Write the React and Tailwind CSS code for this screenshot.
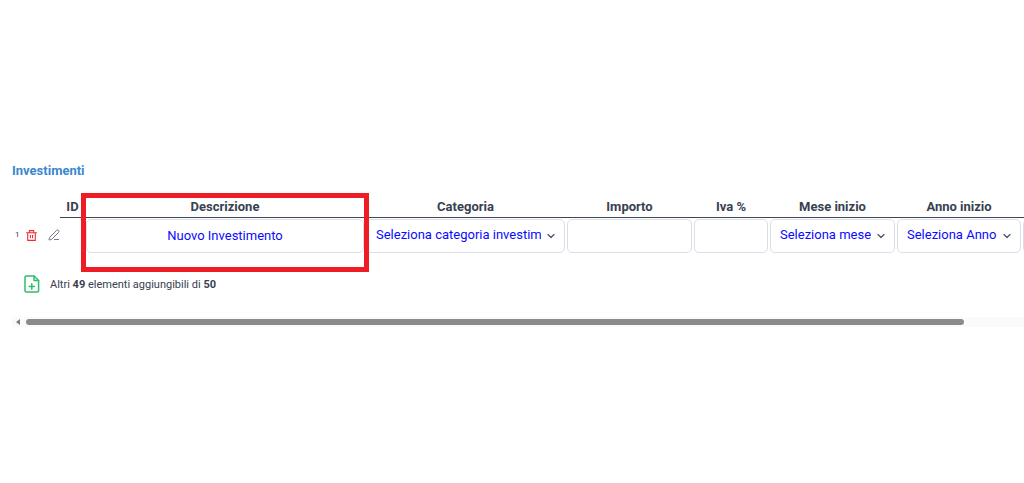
import { PenLine, ChevronDown } from "lucide-react";
import { RiDeleteBinLine } from "react-icons/ri";

const fieldClass =
  "block h-[34px] w-full appearance-none rounded-[5px] border border-[#d8dfe9] bg-white pb-[2px] text-[13px] text-[#0a0aff] outline-none";

function TextField({ label, value }) {
  return (
    <input
      type="text"
      aria-label={label}
      defaultValue={value}
      className={`${fieldClass} px-2 text-center`}
    />
  );
}

function SelectField({ label, placeholder }) {
  return (
    <div className="relative">
      <select aria-label={label} className={`${fieldClass} pr-[23px] pl-[9px]`}>
        <option>{placeholder}</option>
      </select>
      <ChevronDown
        className="pointer-events-none absolute top-[11px] right-2 size-3 text-[#4a5568]"
        strokeWidth={2.5}
      />
    </div>
  );
}

function FileAddIcon() {
  return (
    <svg
      viewBox="0 0 16 18"
      className="h-[18px] w-4"
      fill="none"
      stroke="currentColor"
      strokeWidth="1.5"
      strokeLinecap="round"
      strokeLinejoin="round"
    >
      <path d="M10 1H2.2A1.2 1.2 0 0 0 1 2.2v13.6A1.2 1.2 0 0 0 2.2 17h11.2a1.2 1.2 0 0 0 1.2-1.2V5.5z" />
      <path d="M10 1v4.5h4.6" />
      <path d="M7.8 8.8v5.4M5.1 11.5h5.4" />
    </svg>
  );
}

const thClass = "border-b border-[#3f4652] p-0";

export default function App() {
  return (
    <main className="min-h-screen overflow-hidden bg-white pt-[161px] font-['Roboto',sans-serif] text-[#374151]">
      <section className="pl-3">
        <h2 className="text-[13px] leading-5 font-bold text-[#3b87d0]">Investimenti</h2>

        <div className="overflow-hidden pt-[15px]">
          <table className="w-[1138px] table-fixed border-separate border-spacing-0">
            <colgroup>
              <col className="w-12" />
              <col className="w-[25px]" />
              <col className="w-[280px]" />
              <col className="w-[201px]" />
              <col className="w-[127px]" />
              <col className="w-[76px]" />
              <col className="w-[127px]" />
              <col className="w-[126px]" />
              <col className="w-[128px]" />
            </colgroup>
            <thead>
              <tr className="h-[22px] text-[13px] leading-[21px] font-bold">
                <td />
                <th className={thClass}>ID</th>
                <th className={`${thClass} relative`}>
                  Descrizione
                  <span className="pointer-events-none absolute -inset-x-1 -top-[3px] z-10 h-[79px] border-5 border-[#ee1c25]" />
                </th>
                <th className={thClass}>Categoria</th>
                <th className={thClass}>Importo</th>
                <th className={thClass}>Iva %</th>
                <th className={thClass}>Mese inizio</th>
                <th className={thClass}>Anno inizio</th>
                <td className={thClass} />
              </tr>
            </thead>
            <tbody>
              <tr>
                <td className="p-0">
                  <div className="flex items-center pb-[2px] pl-[3px]">
                    <span className="w-[10px] text-[8px] leading-3">1</span>
                    <button type="button" aria-label="Elimina" className="text-[#f02a30]">
                      <RiDeleteBinLine className="size-[13px]" />
                    </button>
                    <button type="button" aria-label="Modifica" className="ml-[10px] text-[#5a6475]">
                      <PenLine className="size-3" strokeWidth={1.75} />
                    </button>
                  </div>
                </td>
                <td className="p-0" />
                <td className="p-px">
                  <TextField label="Descrizione" value="Nuovo Investimento" />
                </td>
                <td className="p-px">
                  <SelectField label="Categoria" placeholder="Seleziona categoria investimento" />
                </td>
                <td className="p-px">
                  <TextField label="Importo" />
                </td>
                <td className="p-px">
                  <TextField label="Iva %" />
                </td>
                <td className="p-px">
                  <SelectField label="Mese inizio" placeholder="Seleziona mese" />
                </td>
                <td className="p-px">
                  <SelectField label="Anno inizio" placeholder="Seleziona Anno" />
                </td>
                <td className="p-px">
                  <TextField label="Importo rata" />
                </td>
              </tr>
            </tbody>
          </table>

          <div className="mt-[21px] flex items-center gap-[10px] pl-3">
            <button type="button" aria-label="Aggiungi elemento" className="text-[#2fbd6b]">
              <FileAddIcon />
            </button>
            <p className="pt-px text-[11px] leading-4">
              Altri <b>49</b> elementi aggiungibili di <b>50</b>
            </p>
          </div>
        </div>

        <div className="mt-6 flex h-[10px] items-center bg-[#fafafa] pl-1">
          <span className="border-y-3 border-r-4 border-y-transparent border-r-[#7d7d7d]" />
          <div className="ml-[6px] flex-1 pr-[60px]">
            <div className="h-[6px] rounded-full bg-[#8b8b8b]" />
          </div>
        </div>
      </section>
    </main>
  );
}
